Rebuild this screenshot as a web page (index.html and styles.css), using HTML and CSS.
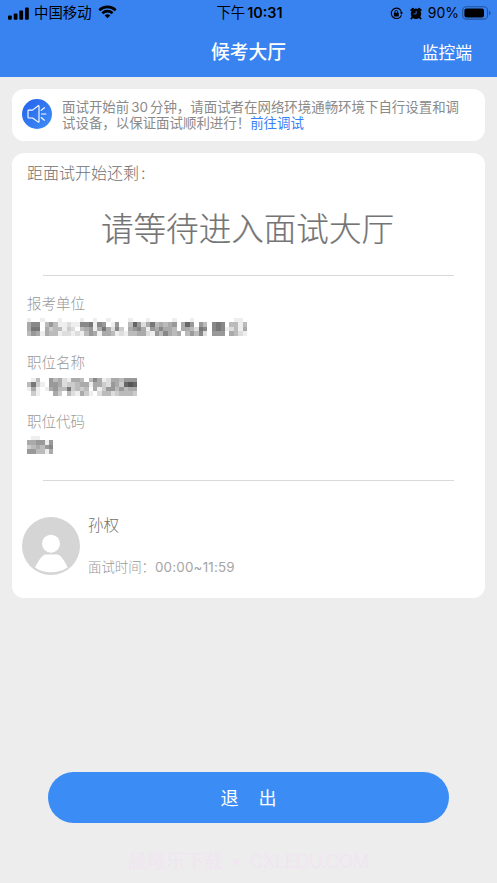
FILE: index.html
```html
<!DOCTYPE html>
<html lang="zh-CN">
<head>
<meta charset="utf-8">
<title>候考大厅</title>
<link rel="stylesheet" href="styles.css">
</head>
<body>
<header class="top">
  <div class="status">
    <div class="status-left">
      <svg class="signal" width="21" height="13" viewBox="0 0 21 13"><rect x="0" y="8.5" width="3.8" height="4.3" rx="1"/><rect x="5.7" y="6.4" width="3.8" height="6.4" rx="1"/><rect x="11.3" y="3.6" width="3.8" height="9.2" rx="1"/><rect x="17" y=".4" width="3.8" height="12.4" rx="1"/></svg>
      <span class="carrier">中国移动</span>
      <svg class="wifi" width="19" height="14" viewBox="0 0 19 14"><path d="M1.3 5.2a11.8 11.8 0 0 1 16.4 0M4.4 8.2a7.4 7.4 0 0 1 10.2 0" fill="none" stroke="#000" stroke-width="2.6"/><path d="M9.5 13.3 6.7 10.5a4 4 0 0 1 5.6 0z"/></svg>
    </div>
    <div class="clock"><span class="ampm">下午</span><span>10:31</span></div>
    <div class="status-right">
      <svg width="13" height="13" viewBox="0 0 13 13"><path d="M10.6 3.1A5.2 5.2 0 1 0 11.4 8.2M9.2 1.9a5.2 5.2 0 0 1 2.3 4" fill="none" stroke="#000" stroke-width="1.1"/><path d="M9.9 5.5h3.1l-1.5 2.3z"/><rect x="3.9" y="5.8" width="4.8" height="3.7" rx=".5"/><path d="M4.9 6V4.8a1.4 1.4 0 0 1 2.8 0V6" fill="none" stroke="#000"/></svg>
      <svg class="alarm" width="12" height="13" viewBox="0 0 12 13"><circle cx="6" cy="6.8" r="5.2"/><path d="M2.3 10.2 1.4 11.6M9.7 10.2l.9 1.4M1.2 3.1 3 1.6M10.8 3.1 9 1.6" stroke="#000" stroke-width="1.8" stroke-linecap="round"/><path d="M6.2 3.8v3.1H3.5" stroke="#3983f1" stroke-width=".8" fill="none"/></svg>
      <span class="percent">90%</span>
      <svg width="29" height="14" viewBox="0 0 29 14"><rect x=".7" y=".7" width="24.8" height="12.4" rx="3.7" fill="none" stroke="#245399" stroke-width="1.1"/><rect x="2.4" y="2.4" width="19.6" height="9" rx="2"/><path d="M27 4.6v4.6q1.6-.7 1.6-2.3T27 4.6" fill="#245399"/></svg>
    </div>
  </div>
  <div class="nav"><span></span><h1>候考大厅</h1><a class="monitor">监控端</a></div>
</header>
<main>
  <section class="card notice">
    <svg class="speaker" width="30" height="30" viewBox="0 0 30 30"><defs><linearGradient id="sound" x1="0" y1="0" x2="1" y2="1"><stop stop-color="#2460ee"/><stop offset="1" stop-color="#4090f6"/></linearGradient></defs><circle cx="15" cy="15" r="15" fill="url(#sound)"/><path d="M6 11.9q0-.8.8-.8h3.7l5.8-4.3q.7-.4.7.4v15.5q0 .8-.7.4L10.5 19H6.8q-.8 0-.8-.8zM19.2 11.4l3.2-2.7M19.5 15h4.4M19.2 18.5l3.2 2.7" fill="none" stroke="#fff" stroke-width="1.15" stroke-linecap="round" stroke-linejoin="round"/></svg>
    <p><span class="line">面试开始前<span class="num">30</span>分钟，请面试者在网络环境通畅环境下自行设置和调</span><span class="line">试设备，以保证面试顺利进行！<a>前往调试</a></span></p>
  </section>
  <section class="card details">
    <div class="remaining">距面试开始还剩<span class="colon">:</span></div>
    <div class="waiting">请等待进入面试大厅</div>
    <hr>
    <dl>
      <div class="field"><dt>报考单位</dt><dd><svg class="mosaic" data-rows="effefffeffffeffeffeffffefffefffffefffefffffffffeef|a88fb9beedee887e89fe9ffb69da7baba9fa69f9bf878fbbeb88|a77facbbecdfba9ea7ad8cfa98ae9a8aabfaabd78f878edbeacc|b9aeabbeddedeb9aeaabedebbaade9b8abafb9b8df999fabdebb"></svg></dd></div>
      <div class="field"><dt>职位名称</dt><dd><svg class="mosaic tall" data-rows="febff9badeaabfb8aedaab999|b7cef99adccbaaeaacd9ac656|eaefea9bb7cbcbfaec99b9baa|fcefffacfbdeacefdbbdcbbbc"></svg></dd></div>
      <div class="field"><dt>职位代码</dt><dd><svg class="mosaic" data-rows="feefff|aa99e9|cbab98|99bbea"></svg></dd></div>
    </dl>
    <hr>
    <div class="person">
      <svg width="58" height="58" viewBox="0 0 58 58"><circle cx="29" cy="29" r="29" fill="#d5d5d5"/><circle cx="29" cy="26.7" r="9" fill="#fff"/><path d="M13 50.5q4.3-8.8 8-11.7 1.5-1.2 3.2-1.2h10.5q1.7 0 3.2 1.2 3.6 2.9 7.8 11.7Q38.5 55.2 29 55.2T13 50.5" fill="#fff"/></svg>
      <div><div class="name">孙权</div><div class="time"><span>面试时间：</span><span class="range">00:00~11:59</span></div></div>
    </div>
  </section>
</main>
<button class="exit"><span>退</span><span>出</span></button>
<footer><span class="brand">晨曦乐下载</span><span>•</span><span class="site">CXLEDU.COM</span></footer>
<script src="mosaic.js"></script>
</body>
</html>
```
FILE: styles.css
```css
* { box-sizing: border-box; }
body { margin: 0; width: 497px; height: 883px; overflow: hidden; background: #ededed; color: #707070; font-family: Inter, "Noto Sans CJK SC", sans-serif; font-weight: 300; display: flex; flex-direction: column; }
svg { display: block; flex: none; }
.top { height: 77px; background: #3983f1; color: #000; flex: none; }
.status { height: 26px; display: grid; grid-template-columns: 1fr auto 1fr; align-items: center; padding: 0 6px 0 8px; font-size: 14.4px; font-weight: 400; line-height: 26px; }
.status-left, .status-right, .clock { display: flex; align-items: center; white-space: nowrap; }
.carrier { margin-left: 5px; }
.wifi { margin-left: 6px; margin-top: -2px; }
.clock { gap: 2px; font-weight: 600; }
.ampm { font-weight: 400; }
.status-right { justify-content: flex-end; }
.alarm { margin-left: 7px; }
.percent { margin: 0 3px 0 6px; font-size: 14px; }
.nav { height: 51px; display: grid; grid-template-columns: 1fr auto 1fr; align-items: center; padding: 0 25px; color: #fff; }
h1 { margin: 2px 0 0; font-size: 18.8px; line-height: 28px; font-weight: 500; }
.monitor { justify-self: end; font-size: 16.8px; font-weight: 400; }
main { display: flex; flex-direction: column; gap: 12px; padding: 12px 12px 0; }
.card { background: #fff; border-radius: 12px; width: 473px; }
.notice { height: 52px; display: flex; padding: 10px; }
.notice p { margin: 1px 0 0 10px; font-size: 13.45px; line-height: 15.5px; font-weight: 400; color: #8a8a8a; }
.line { display: block; white-space: nowrap; }
.num { margin: 0 2px; }
.notice a { color: #387ff5; }
.details { height: 445px; padding: 8px 10px 0 15px; }
.remaining { font-size: 16px; line-height: 24px; }
.colon { margin-left: 2px; }
.waiting { margin-top: 22px; font-size: 32.6px; line-height: 44px; text-align: center; margin-left: -7px; -webkit-text-stroke: .2px currentColor; color: #747474; }
hr { height: 1px; border: 0; background: #d9d9d9; margin: 24px 21px 0 16px; }
dl { margin: 18px 0 0; }
.field { height: 59px; }
dt { font-size: 14.5px; line-height: 20px; color: #989898; }
dd { margin: 4px 0 0; }
.tall { margin-top: 5px; }
dl + hr { margin-top: 9px; }
.person { display: flex; gap: 8px; margin: 36px 0 0 -5px; }
.name { font-size: 15.5px; line-height: 20px; margin-top: -1px; }
.time { display: flex; font-size: 13.4px; line-height: 18px; margin-top: 22px; color: #989898; }
.range { font-weight: 400; letter-spacing: .2px; color: #a5a5a5; }
.exit { flex: none; width: 401px; height: 51px; margin: 174px 0 0 48px; padding: 0; border: 0; border-radius: 26px; background: #3c8cf6; color: #fff; font: 400 18px/51px "Noto Sans CJK SC", sans-serif; display: flex; justify-content: center; gap: 20px; }
footer { display: flex; justify-content: center; gap: 8px; margin-top: 25px; color: #f0e5f1; font-size: 19px; line-height: 28px; font-weight: 400; }
.site { letter-spacing: -.7px; }
```
FILE: mosaic.js
```js
const size = 4.4;
document.querySelectorAll('.mosaic').forEach(svg => {
  const rows = svg.dataset.rows.split('|');
  const cols = Math.min(50, Math.max(...rows.map(r => r.length)));
  svg.setAttribute('width', cols * size);
  svg.setAttribute('height', rows.length * size);
  svg.setAttribute('shape-rendering', 'crispEdges');
  rows.forEach((row, y) => [...row.slice(0, cols)].forEach((shade, x) => {
    const cell = document.createElementNS('http://www.w3.org/2000/svg', 'rect');
    Object.entries({ x: x * size, y: y * size, width: size, height: size, fill: '#' + shade.repeat(3) })
      .forEach(([key, value]) => cell.setAttribute(key, value));
    svg.append(cell);
  }));
});
```
